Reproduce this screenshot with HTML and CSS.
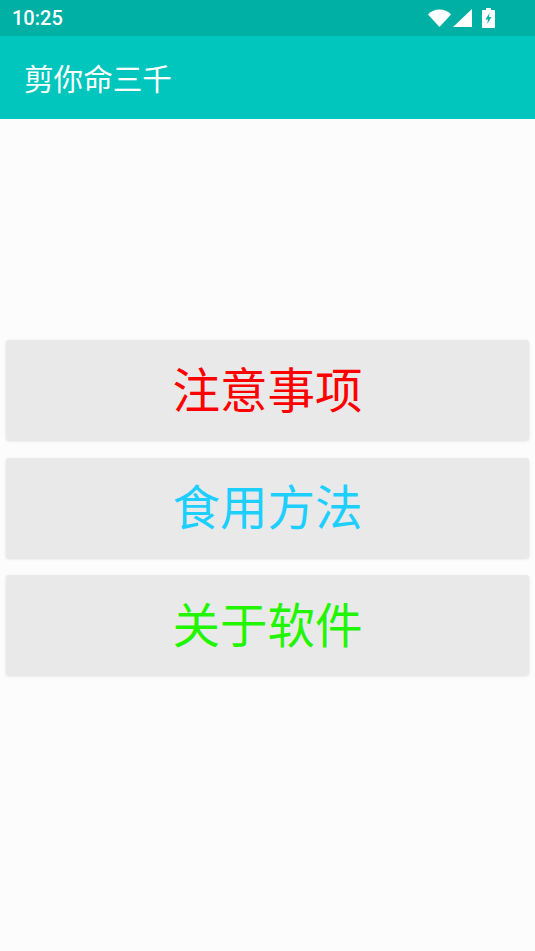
FILE: index.html
```html
<!DOCTYPE html>
<html lang="zh-CN">
<head>
<meta charset="utf-8">
<title>剪你命三千</title>
<link rel="stylesheet" href="styles.css">
</head>
<body>
<div class="app">
  <div class="status">
    <span class="time">10:25</span>
    <div class="status-icons">
      <svg class="wifi" width="23" height="18" viewBox="0 0 23 18"><path d="M0 5.5C3 2.3 7 .6 11.500 .6S20 2.300 23 5.500L11.500 18z" fill="#fff"/></svg>
      <svg class="signal" width="19" height="18" viewBox="0 0 19 18"><path d="M0 18L19 0v18z" fill="#fff"/></svg>
      <svg class="battery" width="13" height="20" viewBox="0 0 13 20"><path d="M4 0h5v2h3a1 1 0 0 1 1 1v16a1 1 0 0 1-1 1H1a1 1 0 0 1-1-1V3a1 1 0 0 1 1-1h3z" fill="#fff"/><path d="M7.500 5L3.500 11.500h2.500l-.8 4.500 4.300-7H7z" fill="#00b0a5"/></svg>
    </div>
  </div>
  <header class="toolbar">剪你命三千</header>
  <main class="content">
    <button class="btn red">注意事项</button>
    <button class="btn blue">食用方法</button>
    <button class="btn green">关于软件</button>
  </main>
</div>
</body>
</html>
```
FILE: styles.css
```css
* { box-sizing: border-box; }
html, body { margin: 0; height: 100%; }
body { background: #fcfcfc; font-family: "Noto Sans CJK SC", "Roboto", sans-serif; overflow: hidden; }
.app { height: 951px; display: flex; flex-direction: column; }
.status { height: 36px; flex: none; background: #00b0a5; color: #fff; display: flex; align-items: center; justify-content: space-between; padding: 0 40px 0 12px; }
.time { font-family: "Roboto", sans-serif; font-size: 20px; font-weight: 500; }
.status-icons { display: flex; align-items: center; gap: 2px; }
.signal { margin-right: 8px; }
.toolbar { height: 83px; flex: none; background: #00c6bd; color: #fff; font-size: 29.6px; line-height: 83px; padding-left: 24px; }
.content { flex: 1; display: flex; flex-direction: column; justify-content: center; gap: 17.5px; padding: 0 6px 55px; }
.btn { height: 100px; width: 100%; border: 0; border-radius: 3px; background: #e9e9e9; box-shadow: 0 1px 3px rgba(0,0,0,.12); font-family: inherit; font-size: 47.5px; line-height: 1; padding: 0 0 5px; }
.red { color: #ff0000; }
.blue { color: #1ccfff; }
.green { color: #22f500; }
```
